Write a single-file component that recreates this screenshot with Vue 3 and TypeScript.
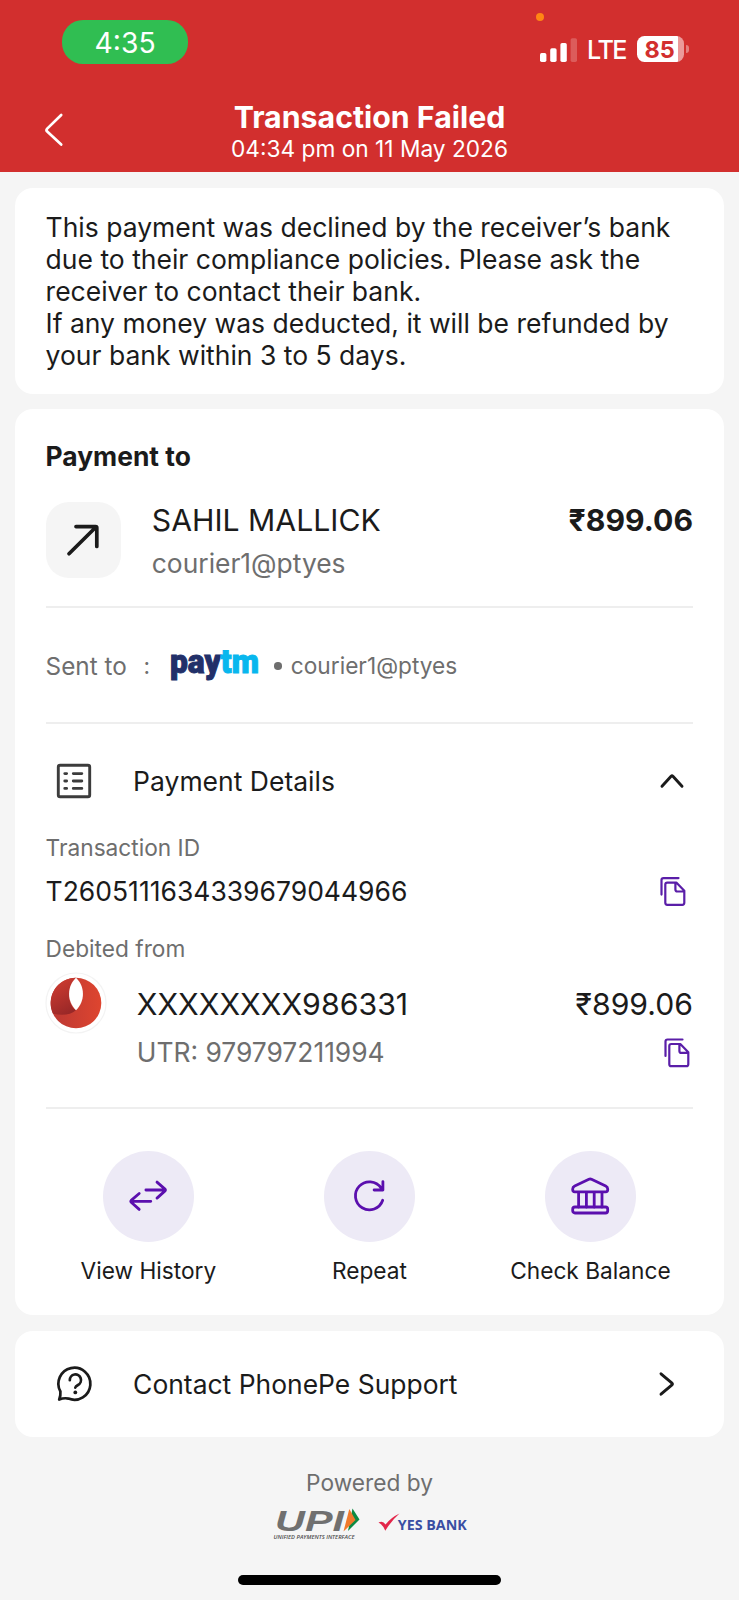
<script setup lang="ts">
interface Action {
  id: 'history' | 'repeat' | 'balance'
  label: string
}

const message: string[] = [
  'This payment was declined by the receiver’s bank',
  'due to their compliance policies. Please ask the',
  'receiver to contact their bank.',
  'If any money was deducted, it will be refunded by',
  'your bank within 3 to 5 days.',
]

const payee = { name: 'SAHIL MALLICK', vpa: 'courier1@ptyes', amount: '₹899.06' }
const transactionId = 'T2605111634339679044966'
const account = { number: 'XXXXXXXX986331', utr: 'UTR: 979797211994', amount: '₹899.06' }

const actions: Action[] = [
  { id: 'history', label: 'View History' },
  { id: 'repeat', label: 'Repeat' },
  { id: 'balance', label: 'Check Balance' },
]
</script>

<template>
  <div class="page">
    <header class="header">
      <div class="status">
        <div class="clock">4:35</div>
        <span class="mic-dot"></span>
        <div class="indicators">
          <svg class="signal" width="37" height="24" viewBox="0 0 37 24">
            <rect x="0" y="15" width="6.4" height="9" rx="1.7" fill="#fff" />
            <rect x="10.2" y="10.3" width="6.4" height="13.7" rx="1.7" fill="#fff" />
            <rect x="20.4" y="5" width="6.4" height="19" rx="1.7" fill="#fff" />
            <rect x="30.6" y="0.3" width="6.4" height="23.7" rx="1.7" fill="#fff" fill-opacity=".22" />
          </svg>
          <span class="network">LTE</span>
          <div class="battery"><span class="level">85</span></div>
          <span class="battery-tip"></span>
        </div>
      </div>
      <div class="nav">
        <svg class="back" width="20" height="34" viewBox="0 0 20 34" fill="none" stroke="#fff" stroke-width="2.7" stroke-linecap="round" stroke-linejoin="round">
          <path d="M17.2 2 3.2 15.6q-1.4 1.5 0 3L17.2 31.6" />
        </svg>
        <div class="heading">
          <h1>Transaction Failed</h1>
          <p>04:34 pm on 11 May 2026</p>
        </div>
      </div>
    </header>

    <main class="content">
      <section class="card notice">
        <p v-for="line in message" :key="line">{{ line }}</p>
      </section>

      <section class="card payment">
        <h2>Payment to</h2>
        <div class="payee">
          <div class="avatar">
            <svg width="34" height="34" viewBox="0 0 34 34" fill="none" stroke="#1b1b1b" stroke-width="3.7" stroke-linecap="round" stroke-linejoin="round">
              <path d="M3 30.8 30 4M10 3.6h19.6q1.2 0 1.2 1.2v18.6" />
            </svg>
          </div>
          <div class="payee-text">
            <span class="name">{{ payee.name }}</span>
            <span class="vpa">{{ payee.vpa }}</span>
          </div>
          <strong class="amount">{{ payee.amount }}</strong>
        </div>

        <hr />

        <div class="sent">
          <span class="sent-label">Sent to</span>
          <span class="colon">:</span>
          <svg class="paytm" width="88" height="32" viewBox="0 0 88 32">
            <text y="22.6" font-size="33" font-weight="900" textLength="89" lengthAdjust="spacingAndGlyphs" stroke-width="1"><tspan fill="#223069" stroke="#223069">pay</tspan><tspan fill="#08b7ee" stroke="#08b7ee">tm</tspan></text>
          </svg>
          <span class="bullet"></span>
          <span class="sent-vpa">{{ payee.vpa }}</span>
        </div>

        <hr />

        <div class="details-head">
          <svg class="list-icon" width="36" height="36" viewBox="0 0 36 36" fill="none" stroke="#3c3c3c" stroke-width="2.9" stroke-linecap="round">
            <rect x="2.3" y="2.3" width="31.4" height="31.4" rx="1.8" />
            <path d="M8.8 10.6h1.8M17.3 10.6h8.5M8.8 18h1.8M17.3 18h8.5M8.8 25.4h1.8M17.3 25.4h8.5" />
          </svg>
          <span>Payment Details</span>
          <svg class="chevron-up" width="26" height="18" viewBox="0 0 26 18" fill="none" stroke="#1b1b1b" stroke-width="2.9" stroke-linecap="round" stroke-linejoin="round">
            <path d="M3 14.3 12.1 4.2q.9-.9 1.8 0L23 14.3" />
          </svg>
        </div>

        <p class="label">Transaction ID</p>
        <div class="value-row">
          <span>{{ transactionId }}</span>
          <svg class="copy-icon copy-id" width="28" height="32" viewBox="0 0 28 32" fill="none" stroke="#5a1ea8" stroke-width="2.2" stroke-linecap="round" stroke-linejoin="round">
            <path d="M2.5 19.6V5.1q0-2 2-2h15M8.3 7.6h9l8 8.2v12q0 2-2 2H8.3q-2 0-2-2V9.6q0-2 2-2ZM16.4 7.8v6.7q0 2 2 2h6.7" />
          </svg>
        </div>

        <p class="label debited">Debited from</p>
        <div class="account">
          <svg class="bank-logo" width="62" height="62" viewBox="0 0 62 62">
            <defs>
              <linearGradient id="bank-dark" x1="0.3" y1="0" x2="0.7" y2="1">
                <stop offset="0" stop-color="#cf3c31" />
                <stop offset="1" stop-color="#972727" />
              </linearGradient>
              <linearGradient id="bank-light" x1="0" y1="0" x2="1" y2="0">
                <stop offset="0.15" stop-color="#c03a33" />
                <stop offset="1" stop-color="#de452f" />
              </linearGradient>
            </defs>
            <circle cx="31" cy="31" r="30" fill="#fff" stroke="#f3f3f3" stroke-width="1.2" />
            <circle cx="31" cy="31" r="25.3" fill="url(#bank-light)" />
            <path d="M31 5.7A25.3 25.3 0 0 0 8 41.8Q23 45 31 38.3 24 34 24 22 24 12 31 5.7Z" fill="url(#bank-dark)" />
            <path d="M31 5.7C22 14 21.5 29 31 38.3 40.5 29 40 14 31 5.7Z" fill="#fff" />
          </svg>
          <div class="account-text">
            <span class="number">{{ account.number }}</span>
            <span class="utr">{{ account.utr }}</span>
          </div>
          <div class="account-side">
            <span class="debit">{{ account.amount }}</span>
            <svg class="copy-icon" width="28" height="32" viewBox="0 0 28 32" fill="none" stroke="#5a1ea8" stroke-width="2.2" stroke-linecap="round" stroke-linejoin="round">
              <path d="M2.5 19V4.5q0-2 2-2h15M8.3 7h9l8 8.2v12q0 2-2 2H8.3q-2 0-2-2V9q0-2 2-2ZM16.4 7.2v6.7q0 2 2 2h6.7" />
            </svg>
          </div>
        </div>

        <hr class="last-rule" />

        <div class="actions">
          <div v-for="action in actions" :key="action.id" class="action">
            <div class="disc">
              <svg width="44" height="44" viewBox="0 0 44 44" fill="none" stroke="#5b0fae" stroke-width="2.8" stroke-linecap="round" stroke-linejoin="round">
                <path v-if="action.id === 'history'" d="M19.9 16H39.2M31 8.1l8 7q.9.900 0 1.800l-8 7.200M24.800 27.300H5.200M13.200 19.500l-8 6.900q-.9.900 0 1.800l8 7.200" />
                <path v-else-if="action.id === 'repeat'" d="M35.700 26.300A14 14 0 1 1 34.100 14.100L35.900 15.900M35.900 7.600V16H27.100" />
                <g v-else>
                  <path d="M20.900 5.300q1.300-.6 2.600 0L37.700 11.900q2 1 2 3v.9q0 2-2 2h-31q-2 0-2-2v-.9q0-2 2-3Z" />
                  <rect x="4.700" y="33" width="35" height="6" rx="2.200" />
                  <path d="M10.600 18.300V33M18.400 18.300V33M26.200 18.300V33M34 18.300V33" />
                </g>
              </svg>
            </div>
            <span>{{ action.label }}</span>
          </div>
        </div>
      </section>

      <section class="card support">
        <svg class="help-icon" width="38" height="38" viewBox="0 0 38 38" fill="none" stroke="#1b1b1b" stroke-width="2.7" stroke-linecap="round" stroke-linejoin="round">
          <path d="M3.2 34.6Q4.800 31 4.400 26.500A16 16 0 1 1 12.500 33.600Q8 32.600 3.200 34.600Z" />
          <path d="M13.800 15.200a5.600 5.600 0 1 1 8.200 4.800q-2.500 1.400-2.700 2.600" />
          <circle cx="19.300" cy="27.400" r="1.900" fill="#1b1b1b" stroke="none" />
        </svg>
        <span>Contact PhonePe Support</span>
        <svg class="chevron-right" width="18" height="28" viewBox="0 0 18 28" fill="none" stroke="#1b1b1b" stroke-width="2.9" stroke-linecap="round" stroke-linejoin="round">
          <path d="M3 3.8 14 13.2q.9.8 0 1.600L3 24.200" />
        </svg>
      </section>
    </main>

    <footer class="footer">
      <p>Powered by</p>
      <div class="partners">
        <svg class="upi" width="88" height="34" viewBox="0 0 88 34">
          <text class="upi-word" x="2" y="22.5" textLength="69" lengthAdjust="spacingAndGlyphs">UPI</text>
          <path d="M79.5 0.500 86.500 11.500 75 23Z" fill="#0c8a43" />
          <path d="M76.300 1 82.500 12 70.500 23.500Z" fill="#f0792b" />
          <text class="upi-caption" x="0.500" y="31" textLength="81" lengthAdjust="spacingAndGlyphs">UNIFIED PAYMENTS INTERFACE</text>
        </svg>
        <svg class="yes" width="90" height="24" viewBox="0 0 90 24">
          <path d="M0.500 10.500Q5 8.200 7.500 12.500 13 5.500 21.500 1.500 13.500 8.500 7.300 18.700 5 12.800 0.500 10.500Z" fill="#e3264a" />
          <text x="19.800" y="17.500" textLength="69" lengthAdjust="spacingAndGlyphs">YES BANK</text>
        </svg>
      </div>
      <div class="home-bar"></div>
    </footer>
  </div>
</template>

<style>
body {
  margin: 0;
  background: #f5f5f5;
}
</style>

<style scoped>
.page {
  box-sizing: border-box;
  display: flex;
  flex-direction: column;
  width: 739px;
  height: 1600px;
  overflow: hidden;
  background: #f5f5f5;
  color: #1b1b1b;
  font-family: Inter, "Liberation Sans", sans-serif;
  font-size: 26.5px;
  line-height: 32px;
}
h1, h2, p {
  margin: 0;
}
svg {
  display: block;
  flex: none;
  overflow: visible;
}
.header {
  height: 172.3px;
  flex: none;
  background: #d22f2e;
  color: #fff;
}
.status {
  position: relative;
  display: flex;
  justify-content: space-between;
  height: 99.3px;
  padding: 0 50.5px 0 62.3px;
}
.clock {
  width: 125.7px;
  height: 43.7px;
  margin-top: 20px;
  border-radius: 21px;
  background: #30be52;
  font-size: 28.3px;
  line-height: 46px;
  text-align: center;
}
.mic-dot {
  position: absolute;
  left: 535.7px;
  top: 12.8px;
  width: 8.6px;
  height: 8.6px;
  border-radius: 50%;
  background: #ff8614;
}
.indicators {
  display: flex;
  align-items: center;
  height: 26px;
  margin-top: 36px;
}
.signal {
  margin-top: 1px;
}
.network {
  margin-left: 10.5px;
  padding-top: 2.5px;
  font-size: 25.2px;
  font-weight: 500;
  line-height: 28px;
  letter-spacing: -1.6px;
}
.battery {
  width: 47.3px;
  height: 26px;
  margin-left: 11px;
  border-radius: 7.5px;
  background: linear-gradient(90deg, #fff 40.7px, #eb9a9a 40.7px);
  color: #d22f2e;
}
.level {
  display: block;
  padding-left: 7.6px;
  font-size: 23.5px;
  font-weight: 700;
  line-height: 27px;
}
.battery-tip {
  width: 2.8px;
  height: 8px;
  margin-left: 1.6px;
  border-radius: 0 4px 4px 0;
  background: #e47f7e;
}
.nav {
  display: grid;
  grid-template-columns: 150px 1fr 150px;
}
.back {
  margin: 14.2px 0 0 43.5px;
}
.heading {
  text-align: center;
}
h1 {
  font-size: 30.3px;
  font-weight: 700;
  line-height: 36px;
}
.heading p {
  font-size: 22.7px;
  line-height: 28px;
}
.content {
  display: flex;
  flex-direction: column;
  gap: 15.5px;
  padding: 15.7px 15px 0 15.3px;
}
.card {
  box-sizing: border-box;
  border-radius: 18px;
  background: #fff;
  padding: 0 31px 0 30.3px;
}
.notice {
  height: 206px;
  padding-top: 23px;
  font-size: 26.5px;
}
.notice p {
  white-space: nowrap;
}
.payment {
  height: 905.8px;
  padding-top: 30.5px;
}
h2 {
  font-size: 26.4px;
  font-weight: 700;
  line-height: 32px;
}
.payee {
  display: flex;
  height: 75.5px;
  margin: 30.5px 0 28.5px;
}
.avatar {
  display: flex;
  align-items: center;
  justify-content: center;
  width: 75.5px;
  height: 75.5px;
  border-radius: 23px;
  background: #f5f5f5;
}
.payee-text {
  display: flex;
  flex-direction: column;
  gap: 8.5px;
  margin-left: 30.7px;
}
.name {
  font-size: 30.2px;
  line-height: 36px;
}
.vpa {
  color: #6e6e6e;
  font-size: 26.4px;
  line-height: 32px;
}
.amount {
  margin-left: auto;
  font-size: 30.2px;
  line-height: 36px;
}
hr {
  height: 2px;
  margin: 0;
  border: 0;
  background: #eeeeee;
}
.sent {
  display: flex;
  align-items: center;
  box-sizing: border-box;
  height: 113.5px;
  padding-top: 1.4px;
  color: #6e6e6e;
  font-size: 22.7px;
}
.sent-label {
  font-size: 24.3px;
}
.colon {
  width: 8px;
  margin-left: 16px;
  text-align: center;
}
.paytm {
  margin-left: 19.5px;
  font-family: Roboto, Inter, sans-serif;
}
.bullet {
  width: 7.5px;
  height: 7.5px;
  margin: 0 9px 0 16px;
  border-radius: 50%;
  background: #6e6e6e;
}
.details-head {
  display: flex;
  align-items: center;
  height: 32px;
  margin-top: 40.8px;
}
.list-icon {
  margin: 0 41px 0 10.5px;
}
.chevron-up {
  margin: 0 8.3px 0 auto;
}
.label {
  margin-top: 37.5px;
  color: #6e6e6e;
  font-size: 22.7px;
  line-height: 28px;
}
.value-row {
  display: flex;
  align-items: center;
  justify-content: space-between;
  height: 32px;
  margin-top: 13px;
}
.copy-id {
  margin-right: 6.3px;
}
.debited {
  margin-top: 28px;
}
.account {
  display: flex;
  height: 94px;
  margin-top: 10.2px;
}
.bank-logo {
  margin: -1px 0 0 -0.5px;
}
.account-text {
  display: flex;
  flex-direction: column;
  gap: 14px;
  padding-top: 12.3px;
  margin-left: 29.7px;
}
.number {
  font-size: 30.3px;
  line-height: 36px;
}
.utr {
  color: #6e6e6e;
  font-size: 26.4px;
  line-height: 32px;
}
.account-side {
  display: flex;
  flex-direction: column;
  align-items: flex-end;
  padding-top: 12.3px;
  margin-left: auto;
}
.debit {
  font-size: 30.2px;
  line-height: 36px;
}
.account-side .copy-icon {
  margin: 15px 2.4px 0 0;
}
.last-rule {
  margin-top: 39.9px;
}
.actions {
  display: grid;
  grid-template-columns: repeat(3, 221px);
  margin: 41.5px 0 0 -7.7px;
}
.action {
  display: flex;
  flex-direction: column;
  align-items: center;
  gap: 15.4px;
  font-size: 22.7px;
  line-height: 28px;
}
.disc {
  display: flex;
  align-items: center;
  justify-content: center;
  width: 91px;
  height: 91px;
  border-radius: 50%;
  background: #edeaf6;
}
.support {
  display: flex;
  align-items: center;
  height: 106px;
  font-size: 26.45px;
}
.help-icon {
  margin: 0 39.2px 0 10.3px;
}
.chevron-right {
  margin: 0 17.5px 0 auto;
}
.footer {
  display: flex;
  flex-direction: column;
  align-items: center;
  padding-top: 32px;
  color: #6e6e6e;
  font-size: 22.7px;
  line-height: 28px;
}
.partners {
  display: flex;
  width: 196px;
  margin-top: 11px;
}
.upi {
  margin-left: 1px;
}
.upi-word {
  fill: #707070;
  font: italic 700 30px "Liberation Sans", sans-serif;
}
.upi-caption {
  fill: #4c4c4c;
  font: italic 600 6px "Open Sans", sans-serif;
}
.yes {
  margin: 4.5px 0 0 17px;
  fill: #3a4ea3;
  font: 700 14.5px "Open Sans", sans-serif;
}
.home-bar {
  width: 263.5px;
  height: 9.7px;
  margin-top: 33.3px;
  border-radius: 5px;
  background: #000;
}
</style>
